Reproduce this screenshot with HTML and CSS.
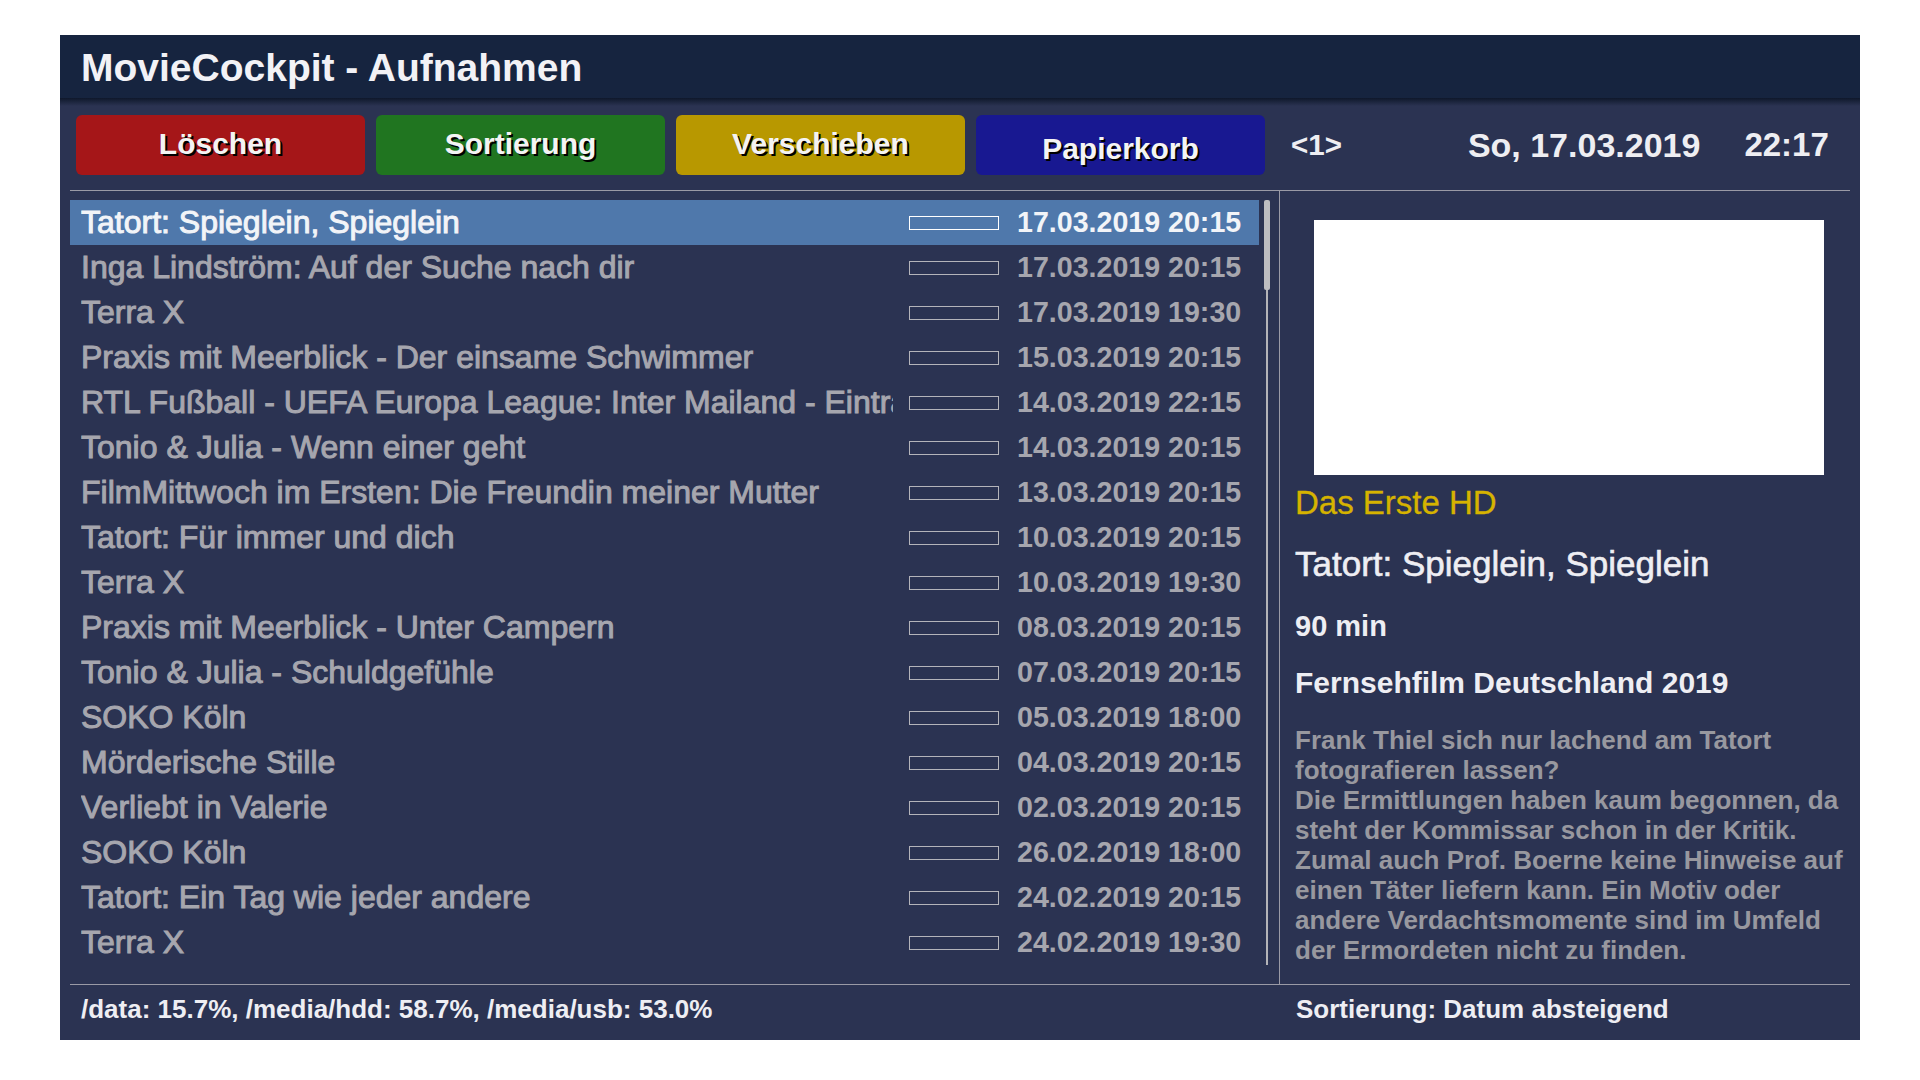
FILE: index.html
```
<!DOCTYPE html>
<html lang="de">
<head>
<meta charset="utf-8">
<title>MovieCockpit - Aufnahmen</title>
<link rel="stylesheet" href="styles.css">
</head>
<body>
<div class="panel">
  <div class="header">MovieCockpit - Aufnahmen</div>
  <div class="header-shadow"></div>
  <div class="toolbar">
    <div class="btn btn-red">Löschen</div>
    <div class="btn btn-green">Sortierung</div>
    <div class="btn btn-yellow">Verschieben</div>
    <div class="btn btn-blue">Papierkorb</div>
    <div class="page">&lt;1&gt;</div>
    <div class="date">So, 17.03.2019</div>
    <div class="time">22:17</div>
  </div>
  <div class="main">
    <div class="list-col">
      <div class="list">
        <div class="row selected"><span class="title">Tatort: Spieglein, Spieglein</span><span class="bar"></span><span class="when">17.03.2019 20:15</span></div>
        <div class="row"><span class="title">Inga Lindström: Auf der Suche nach dir</span><span class="bar"></span><span class="when">17.03.2019 20:15</span></div>
        <div class="row"><span class="title">Terra X</span><span class="bar"></span><span class="when">17.03.2019 19:30</span></div>
        <div class="row"><span class="title">Praxis mit Meerblick - Der einsame Schwimmer</span><span class="bar"></span><span class="when">15.03.2019 20:15</span></div>
        <div class="row"><span class="title">RTL Fußball - UEFA Europa League: Inter Mailand - Eintracht Frankfurt</span><span class="bar"></span><span class="when">14.03.2019 22:15</span></div>
        <div class="row"><span class="title">Tonio &amp; Julia - Wenn einer geht</span><span class="bar"></span><span class="when">14.03.2019 20:15</span></div>
        <div class="row"><span class="title">FilmMittwoch im Ersten: Die Freundin meiner Mutter</span><span class="bar"></span><span class="when">13.03.2019 20:15</span></div>
        <div class="row"><span class="title">Tatort: Für immer und dich</span><span class="bar"></span><span class="when">10.03.2019 20:15</span></div>
        <div class="row"><span class="title">Terra X</span><span class="bar"></span><span class="when">10.03.2019 19:30</span></div>
        <div class="row"><span class="title">Praxis mit Meerblick - Unter Campern</span><span class="bar"></span><span class="when">08.03.2019 20:15</span></div>
        <div class="row"><span class="title">Tonio &amp; Julia - Schuldgefühle</span><span class="bar"></span><span class="when">07.03.2019 20:15</span></div>
        <div class="row"><span class="title">SOKO Köln</span><span class="bar"></span><span class="when">05.03.2019 18:00</span></div>
        <div class="row"><span class="title">Mörderische Stille</span><span class="bar"></span><span class="when">04.03.2019 20:15</span></div>
        <div class="row"><span class="title">Verliebt in Valerie</span><span class="bar"></span><span class="when">02.03.2019 20:15</span></div>
        <div class="row"><span class="title">SOKO Köln</span><span class="bar"></span><span class="when">26.02.2019 18:00</span></div>
        <div class="row"><span class="title">Tatort: Ein Tag wie jeder andere</span><span class="bar"></span><span class="when">24.02.2019 20:15</span></div>
        <div class="row"><span class="title">Terra X</span><span class="bar"></span><span class="when">24.02.2019 19:30</span></div>
      </div>
      <div class="scrollbar">
        <div class="thumb"></div>
        <div class="track"></div>
      </div>
    </div>
    <div class="info">
      <div class="cover"></div>
      <div class="channel">Das Erste HD</div>
      <div class="info-title">Tatort: Spieglein, Spieglein</div>
      <div class="duration">90 min</div>
      <div class="genre">Fernsehfilm Deutschland 2019</div>
      <div class="desc">Frank Thiel sich nur lachend am Tatort<br>fotografieren lassen?<br>Die Ermittlungen haben kaum begonnen, da<br>steht der Kommissar schon in der Kritik.<br>Zumal auch Prof. Boerne keine Hinweise auf<br>einen Täter liefern kann. Ein Motiv oder<br>andere Verdachtsmomente sind im Umfeld<br>der Ermordeten nicht zu finden.</div>
    </div>
  </div>
  <div class="footer">
    <div class="disk">/data: 15.7%, /media/hdd: 58.7%, /media/usb: 53.0%</div>
    <div class="sort">Sortierung: Datum absteigend</div>
  </div>
</div>
</body>
</html>
```
FILE: styles.css
```
html, body {
  margin: 0;
  padding: 0;
  background: #ffffff;
}
body {
  font-family: "Liberation Sans", Arial, sans-serif;
  width: 1920px;
  height: 1080px;
  overflow: hidden;
}
.panel {
  margin: 35px 0 0 60px;
  width: 1800px;
  height: 1005px;
  background: #2b3352;
  display: flex;
  flex-direction: column;
}
.header {
  height: 63px;
  background: #16243f;
  color: #f2f2f6;
  font-size: 39px;
  font-weight: bold;
  display: flex;
  align-items: center;
  padding-left: 21px;
  padding-top: 2px;
  box-sizing: border-box;
  flex: none;
}
.header-shadow {
  height: 8px;
  background: linear-gradient(to bottom, #0f182b, #2b3352);
  flex: none;
}
.toolbar {
  margin-top: 9px;
  height: 60px;
  display: flex;
  align-items: center;
  padding-left: 16px;
  flex: none;
}
.btn {
  width: 289px;
  height: 60px;
  margin-right: 11px;
  border-radius: 6px;
  display: flex;
  align-items: center;
  justify-content: center;
  color: #f4f4f4;
  font-size: 30px;
  font-weight: bold;
  text-shadow: 2px 2px 0 #000000;
  padding-bottom: 3px;
  box-sizing: border-box;
}
.btn-red { background: #a51618; }
.btn-green { background: #207520; }
.btn-yellow { background: #b89800; }
.btn-blue {
  background: #181891;
  padding-bottom: 0;
  padding-top: 7px;
  margin-right: 0;
}
.page {
  margin-left: 26px;
  color: #eeeef2;
  font-size: 29.5px;
  font-weight: bold;
}
.date {
  margin-left: 126px;
  color: #eeeef2;
  font-size: 34px;
  font-weight: bold;
}
.time {
  margin-left: 44px;
  color: #eeeef2;
  font-size: 33px;
  font-weight: bold;
}
.main {
  margin: 15px 10px 0 10px;
  border-top: 1px solid #9a9aa6;
  border-bottom: 1px solid #9a9aa6;
  height: 795px;
  box-sizing: border-box;
  display: flex;
  flex: none;
}
.list-col {
  width: 1210px;
  border-right: 1px solid #9a9aa6;
  display: flex;
  padding-top: 9px;
  box-sizing: border-box;
}
.list {
  width: 1189px;
  display: flex;
  flex-direction: column;
}
.row {
  height: 45px;
  display: flex;
  align-items: center;
  color: #a6a6ae;
}
.row.selected {
  background: #4f78ab;
  color: #f2f4f8;
}
.title {
  width: 812px;
  margin-left: 11px;
  white-space: nowrap;
  overflow: hidden;
  font-size: 32px;
  -webkit-text-stroke: 1px currentColor;
}
.bar {
  margin-left: 16px;
  width: 90px;
  height: 14px;
  border: 1px solid #b4b4ba;
  box-sizing: border-box;
  flex: none;
}
.row.selected .bar {
  border-color: #ffffff;
}
.when {
  margin-left: 18px;
  font-size: 28.6px;
  font-weight: bold;
  white-space: nowrap;
}
.scrollbar {
  margin-left: 5px;
  width: 6px;
  height: 765px;
  display: flex;
  flex-direction: column;
  align-items: center;
}
.thumb {
  width: 6px;
  height: 90px;
  background: #bdbdc0;
  border-radius: 2px;
  flex: none;
}
.track {
  width: 2px;
  flex: 1;
  background: #b4b4b8;
}
.info {
  flex: 1;
  padding-left: 15px;
  padding-top: 29px;
  display: flex;
  flex-direction: column;
  align-items: flex-start;
}
.cover {
  margin-left: 19px;
  width: 510px;
  height: 255px;
  background: #ffffff;
  flex: none;
}
.channel {
  margin-top: 8px;
  line-height: 40px;
  font-size: 33px;
  color: #d6b300;
  -webkit-text-stroke: 0.3px currentColor;
}
.info-title {
  margin-top: 21px;
  line-height: 40px;
  font-size: 35px;
  color: #eeeef3;
  -webkit-text-stroke: 0.6px currentColor;
}
.duration {
  margin-top: 22px;
  line-height: 40px;
  font-size: 29px;
  font-weight: bold;
  color: #eeeef3;
}
.genre {
  margin-top: 17px;
  line-height: 40px;
  font-size: 30px;
  font-weight: bold;
  color: #eeeef3;
}
.desc {
  margin-top: 22px;
  line-height: 30px;
  font-size: 26px;
  font-weight: bold;
  color: #98989f;
  white-space: nowrap;
}
.footer {
  flex: 1;
  display: flex;
  align-items: center;
  padding-bottom: 6px;
  box-sizing: border-box;
  color: #eeeef3;
  font-size: 26px;
  font-weight: bold;
}
.disk {
  width: 1215px;
  padding-left: 21px;
}
.sort {
  white-space: nowrap;
}
```
